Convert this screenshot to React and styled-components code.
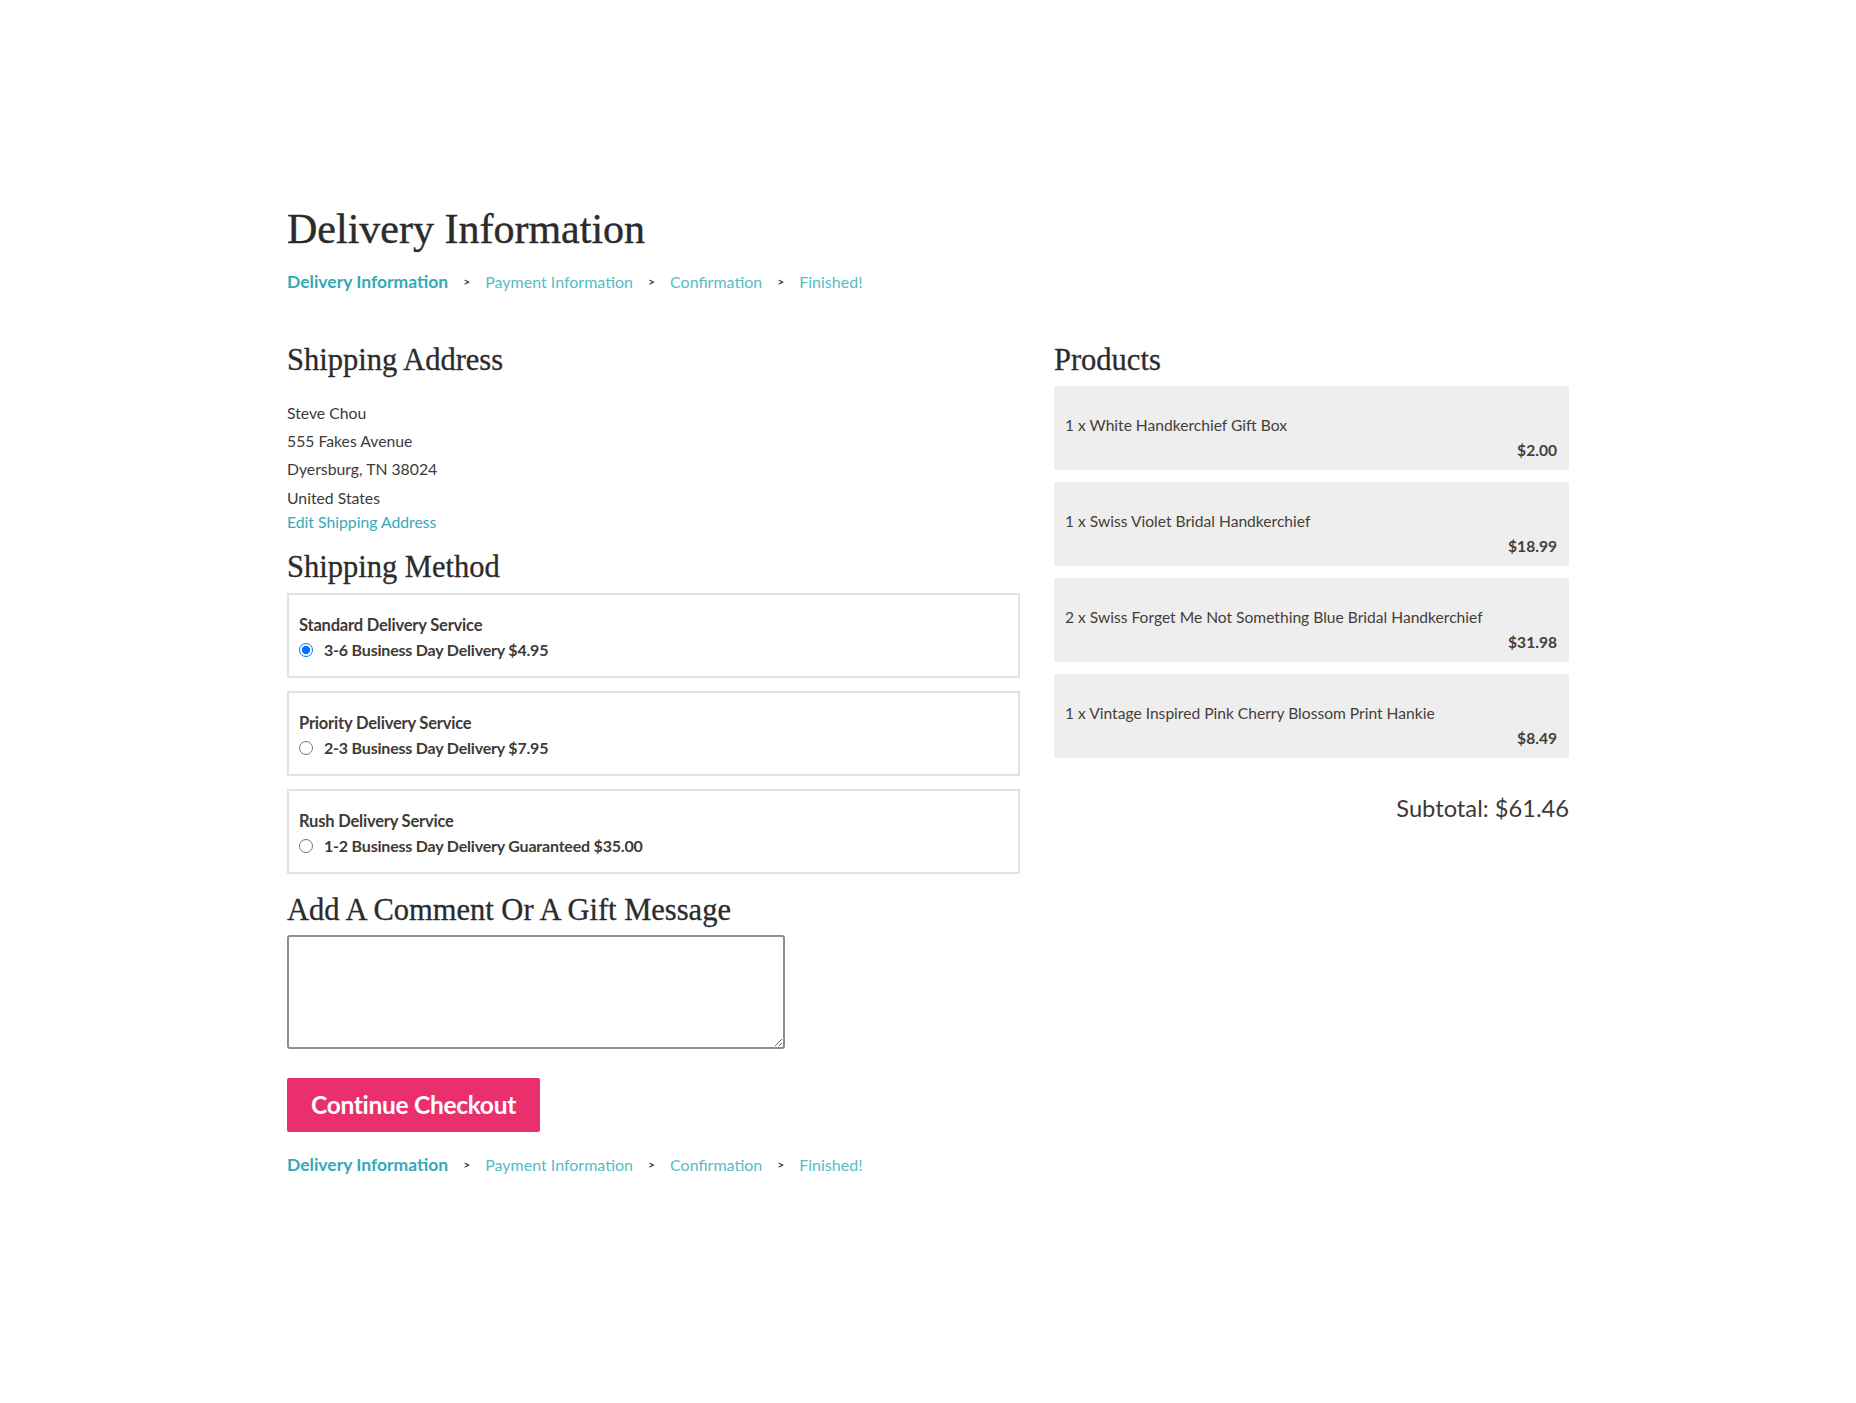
import React, { useState } from "react";
import styled, { createGlobalStyle } from "styled-components";

const GlobalStyle = createGlobalStyle`
  body {
    margin: 0;
    background: #fff;
    font-family: Lato, "Open Sans", sans-serif;
    color: #3d3a38;
  }
`;

const Page = styled.div`
  width: 1282px;
  margin: 0 auto;
  padding: 203px 0 200px;
`;

const Title = styled.h1`
  font-family: "Liberation Serif", serif;
  font-weight: 400;
  font-size: 42px;
  color: #2b2b2b;
  margin: 0 0 15.5px;
  line-height: 52px;
  -webkit-text-stroke: 0.4px #2b2b2b;
`;

const Crumbs = styled.div`
  display: flex;
  align-items: center;
  gap: 15px;
  font-size: 16px;
  line-height: 22px;
`;

const Crumb = styled.a`
  color: ${(p) => (p.$active ? "#35a9ba" : "#55bcc6")};
  font-weight: ${(p) => (p.$active ? 700 : 400)};
  font-size: ${(p) => (p.$active ? 17.5 : 16)}px;
  text-decoration: none;
`;

const Sep = styled.span`
  color: #444;
  font-size: 12px;
  font-weight: 700;
`;

const Columns = styled.div`
  display: grid;
  grid-template-columns: 733px 515px;
  gap: 34px;
  margin-top: 49.5px;
`;

const Heading = styled.h2`
  font-family: "Liberation Serif", serif;
  font-weight: 400;
  font-size: 30.5px;
  line-height: 36px;
  color: #2b2b2b;
  margin: 0 0 ${(p) => p.$gap || 10}px;
  -webkit-text-stroke: 0.3px #2b2b2b;
`;

const Address = styled.div`
  font-size: 15.75px;
  color: #3d3a38;
  margin-bottom: 16.5px;
`;

const AddressLine = styled.div`
  line-height: 28.4px;
`;

const EditLink = styled.a`
  display: block;
  color: #35a9ba;
  line-height: 20px;
  text-decoration: none;
`;

const Methods = styled.div`
  display: flex;
  flex-direction: column;
  gap: 13px;
  margin-bottom: 18.5px;
`;

const MethodBox = styled.div`
  border: 2px solid #e2e2e2;
  padding: 18px 10px 12px;
  height: 85px;
  box-sizing: border-box;
`;

const MethodName = styled.div`
  font-size: 16.5px;
  font-weight: 700;
  color: #3d3a38;
  line-height: 24px;
  letter-spacing: -0.2px;
`;

const Option = styled.label`
  display: flex;
  align-items: center;
  gap: 11px;
  font-size: 16px;
  font-weight: 700;
  color: #3d3a38;
  line-height: 26px;
  letter-spacing: -0.2px;
  cursor: pointer;

  input {
    margin: 0;
    width: 14px;
    height: 14px;
  }
`;

const Comment = styled.textarea`
  display: block;
  width: 498px;
  height: 114px;
  box-sizing: border-box;
  border: 2px solid #8e8e8e;
  border-radius: 3px;
  margin: 0 0 28.5px;
  font-family: inherit;
`;

const Button = styled.button`
  background: #e9306d;
  color: #fff;
  border: none;
  border-radius: 2px;
  width: 253px;
  height: 54px;
  font-family: Lato, sans-serif;
  font-weight: 700;
  font-size: 24.5px;
  letter-spacing: -0.3px;
  cursor: pointer;
  margin-bottom: 22.5px;
`;

const ProductList = styled.div`
  display: flex;
  flex-direction: column;
  gap: 12px;
  margin-top: 2px;
`;

const Product = styled.div`
  background: #eeeeee;
  height: 84px;
  box-sizing: border-box;
  padding: 28px 12px 0 11px;
  font-size: 15.6px;
  color: #463e38;
`;

const ProductName = styled.div`
  line-height: 22px;
`;

const Price = styled.div`
  text-align: right;
  font-weight: 700;
  line-height: 22px;
  margin-top: 3px;
`;

const Subtotal = styled.div`
  text-align: right;
  font-size: 23.7px;
  color: #3d3a38;
  margin-top: 36px;
`;

const steps = ["Delivery Information", "Payment Information", "Confirmation", "Finished!"];

const Breadcrumbs = () => (
  <Crumbs>
    {steps.map((s, i) => (
      <React.Fragment key={s}>
        {i > 0 && <Sep>&gt;</Sep>}
        <Crumb href="#" $active={i === 0}>
          {s}
        </Crumb>
      </React.Fragment>
    ))}
  </Crumbs>
);

const methods = [
  { name: "Standard Delivery Service", label: "3-6 Business Day Delivery $4.95" },
  { name: "Priority Delivery Service", label: "2-3 Business Day Delivery $7.95" },
  { name: "Rush Delivery Service", label: "1-2 Business Day Delivery Guaranteed $35.00" },
];

const products = [
  { name: "1 x White Handkerchief Gift Box", price: "$2.00" },
  { name: "1 x Swiss Violet Bridal Handkerchief", price: "$18.99" },
  { name: "2 x Swiss Forget Me Not Something Blue Bridal Handkerchief", price: "$31.98" },
  { name: "1 x Vintage Inspired Pink Cherry Blossom Print Hankie", price: "$8.49" },
];

export default function App() {
  const [method, setMethod] = useState(0);

  return (
    <>
      <GlobalStyle />
      <Page>
        <Title>Delivery Information</Title>
        <Breadcrumbs />
        <Columns>
          <div>
            <Heading $gap={20.5}>Shipping Address</Heading>
            <Address>
              <AddressLine>Steve Chou</AddressLine>
              <AddressLine>555 Fakes Avenue</AddressLine>
              <AddressLine>Dyersburg, TN 38024</AddressLine>
              <AddressLine>United States</AddressLine>
              <EditLink href="#">Edit Shipping Address</EditLink>
            </Address>
            <Heading $gap={8}>Shipping Method</Heading>
            <Methods>
              {methods.map((m, i) => (
                <MethodBox key={m.name}>
                  <MethodName>{m.name}</MethodName>
                  <Option>
                    <input
                      type="radio"
                      name="shipping"
                      checked={method === i}
                      onChange={() => setMethod(i)}
                    />
                    {m.label}
                  </Option>
                </MethodBox>
              ))}
            </Methods>
            <Heading $gap={7}>Add A Comment Or A Gift Message</Heading>
            <Comment />
            <Button>Continue Checkout</Button>
            <Breadcrumbs />
          </div>
          <div>
            <Heading $gap={8}>Products</Heading>
            <ProductList>
              {products.map((p) => (
                <Product key={p.name}>
                  <ProductName>{p.name}</ProductName>
                  <Price>{p.price}</Price>
                </Product>
              ))}
            </ProductList>
            <Subtotal>Subtotal: $61.46</Subtotal>
          </div>
        </Columns>
      </Page>
    </>
  );
}
